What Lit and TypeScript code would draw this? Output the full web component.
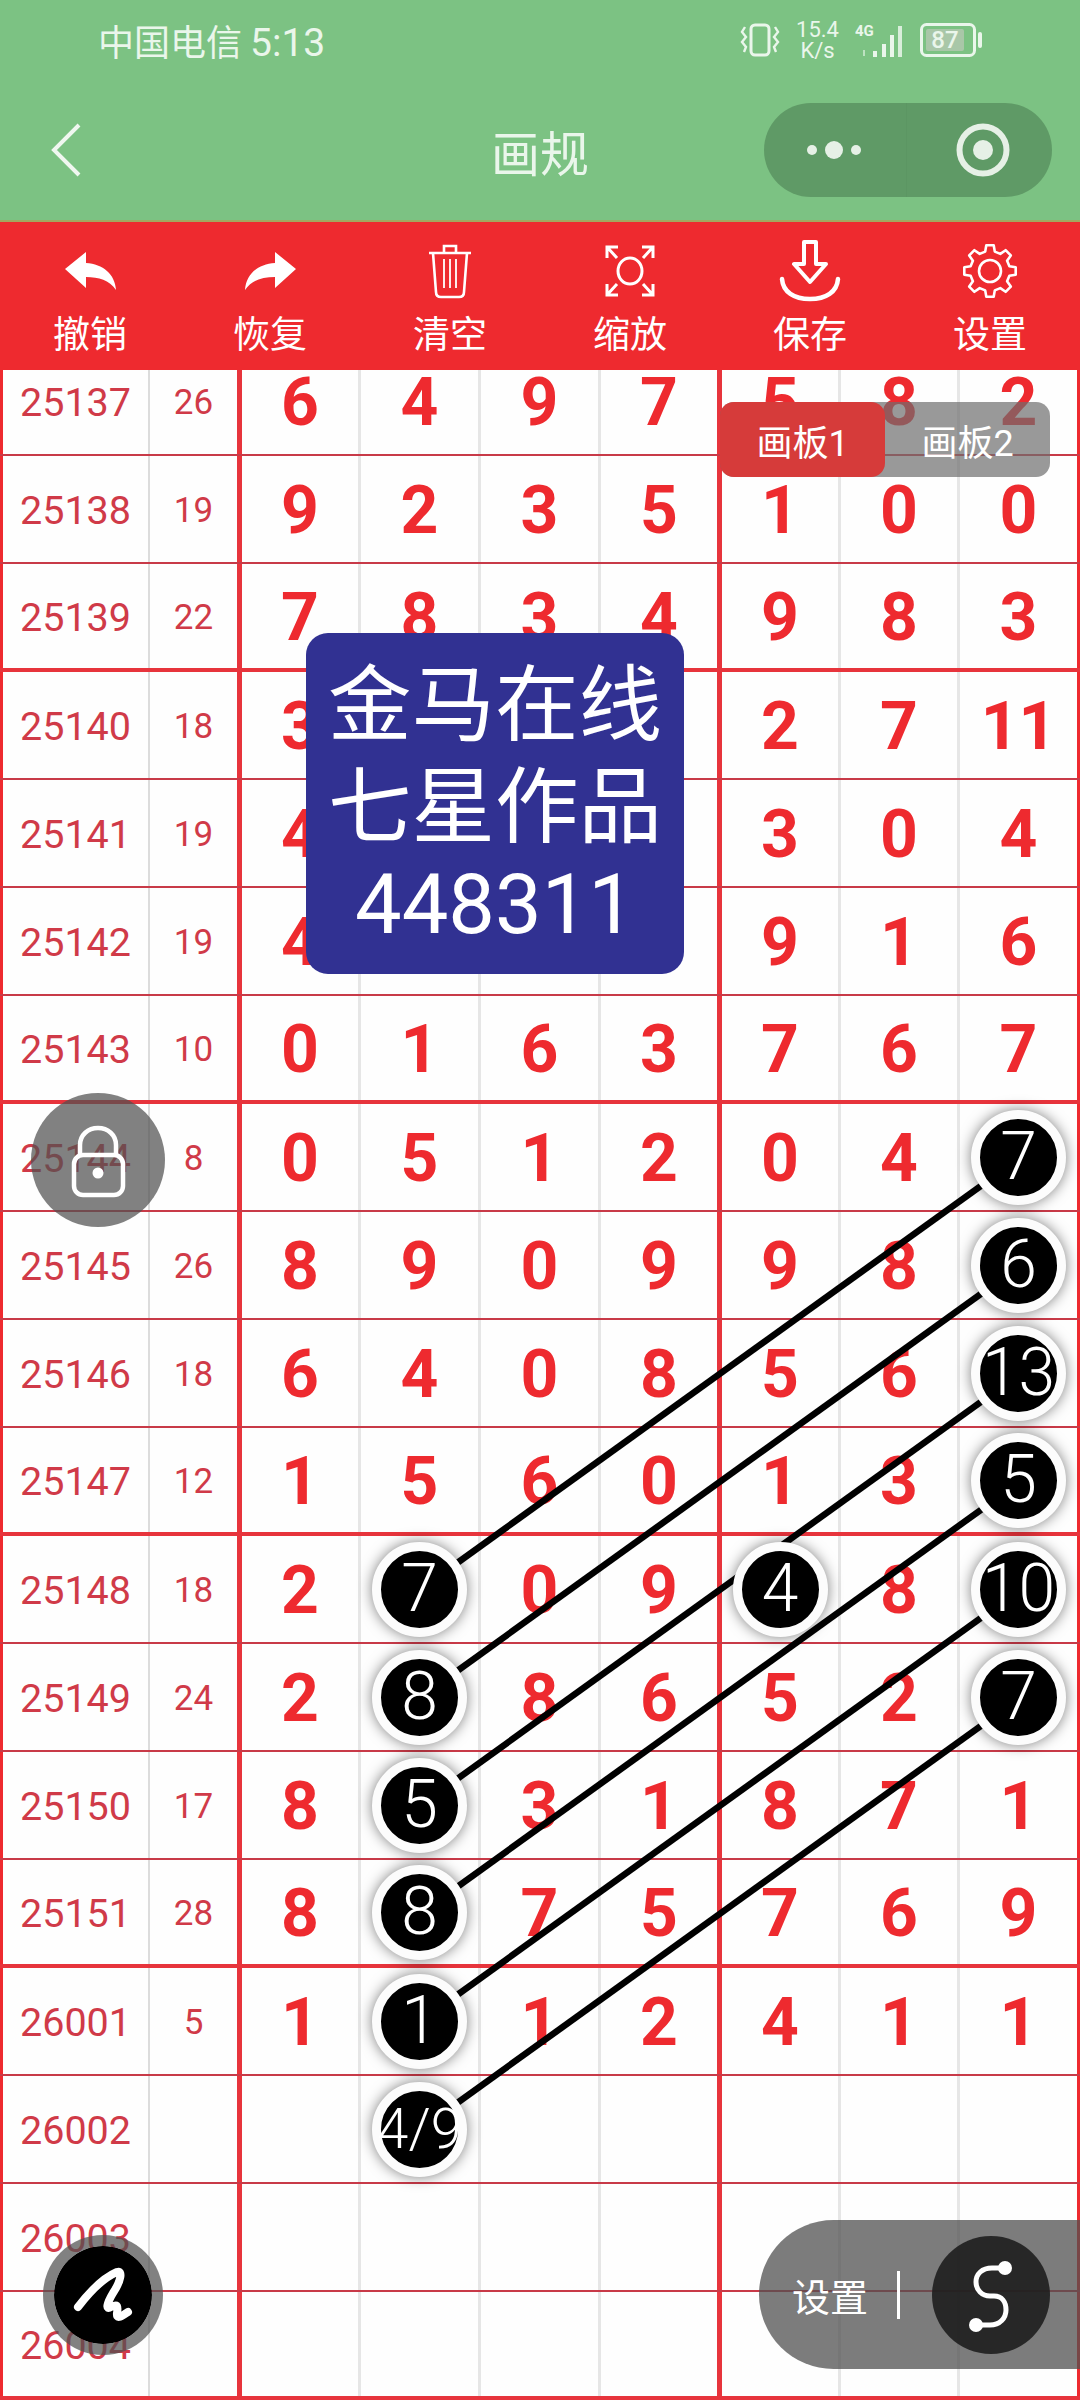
import { html, css, svg, LitElement } from 'lit';
import { customElement } from 'lit/decorators.js';

const ROW_H = 108;

// issue, sum, then the seven digits. Empty means nothing visible in the reference.
const ROWS: string[][] = [
  ['25137', '26', '6', '4', '9', '7', '5', '8', '2'],
  ['25138', '19', '9', '2', '3', '5', '1', '0', '0'],
  ['25139', '22', '7', '8', '3', '4', '9', '8', '3'],
  ['25140', '18', '3', '', '', '', '2', '7', '11'],
  ['25141', '19', '4', '', '', '', '3', '0', '4'],
  ['25142', '19', '4', '', '', '', '9', '1', '6'],
  ['25143', '10', '0', '1', '6', '3', '7', '6', '7'],
  ['25144', '8', '0', '5', '1', '2', '0', '4', ''],
  ['25145', '26', '8', '9', '0', '9', '9', '8', ''],
  ['25146', '18', '6', '4', '0', '8', '5', '6', ''],
  ['25147', '12', '1', '5', '6', '0', '1', '3', ''],
  ['25148', '18', '2', '', '0', '9', '', '8', ''],
  ['25149', '24', '2', '', '8', '6', '5', '2', ''],
  ['25150', '17', '8', '', '3', '1', '8', '7', '1'],
  ['25151', '28', '8', '', '7', '5', '7', '6', '9'],
  ['26001', '5', '1', '', '1', '2', '4', '1', '1'],
  ['26002', '', '', '', '', '', '', '', ''],
  ['26003', '', '', '', '', '', '', '', ''],
  ['26004', '', '', '', '', '', '', '', ''],
];

// "row-digitColumn" -> label
const MARKERS: Record<string, string> = {
  '7-6': '7', '8-6': '6', '9-6': '13', '10-6': '5', '11-6': '10', '12-6': '7',
  '11-1': '7', '12-1': '8', '13-1': '5', '14-1': '8', '15-1': '1', '16-1': '4/9',
  '11-4': '4',
};

const LINKS = [
  [7, 11], [8, 12], [9, 13], [10, 14], [11, 15], [12, 16],
];

const TOOLS = [
  { label: '撤销', icon: 'undo' },
  { label: '恢复', icon: 'redo' },
  { label: '清空', icon: 'trash' },
  { label: '缩放', icon: 'zoom' },
  { label: '保存', icon: 'save' },
  { label: '设置', icon: 'gear' },
];

const colX = (c: number) => 301 + 120 * c;
const rowY = (r: number) => 53 + ROW_H * r;

function gearPath() {
  const pts: string[] = [];
  const teeth = 8;
  for (let i = 0; i < teeth; i++) {
    const a = (i * Math.PI * 2) / teeth;
    const step = Math.PI / teeth;
    const seq: [number, number][] = [
      [20, a - step * 0.62],
      [26, a - step * 0.36],
      [26, a + step * 0.36],
      [20, a + step * 0.62],
    ];
    for (const [r, t] of seq) {
      pts.push(`${(27 + r * Math.sin(t)).toFixed(1)} ${(28 - r * Math.cos(t)).toFixed(1)}`);
    }
  }
  return `M${pts.join(' L')} Z`;
}

const ARROW = 'M1 18 L22 1 V12 C39 13 51 23 52 39 C45 29 35 26 22 26 V37 Z';

const toolIcons: Record<string, unknown> = {
  undo: html`<svg width="53" height="40" viewBox="0 0 53 40"><path d=${ARROW} fill="#fff" /></svg>`,
  redo: html`<svg width="53" height="40" viewBox="0 0 53 40"><path transform="matrix(-1 0 0 1 53 0)" d=${ARROW} fill="#fff" /></svg>`,
  trash: html`<svg width="46" height="56" viewBox="0 0 46 56" fill="none" stroke="#fff" stroke-width="2.6">
    <path d="M2 10 H44 M17 10 V3 H29 V10" />
    <path d="M6 10 L9 49 Q9 54 14 54 H32 Q37 54 37 49 L40 10" />
    <path d="M17 16 V45 M23 16 V45 M29 16 V45" stroke-width="1.8" />
  </svg>`,
  zoom: html`<svg width="50" height="52" viewBox="0 0 50 52" fill="none" stroke="#fff" stroke-width="3">
    <ellipse cx="25" cy="26" rx="12" ry="13" />
    <path d="M2 13 V2 H13 M2 2 L12 13 M37 2 H48 V13 M48 2 L38 13 M2 39 V50 H13 M2 50 L12 39 M37 50 H48 V39 M48 50 L38 39" />
  </svg>`,
  save: html`<svg width="62" height="62" viewBox="0 0 62 62" fill="none" stroke="#fff" stroke-width="4" stroke-linejoin="round" stroke-linecap="round">
    <path d="M25 2 H37 V24 H47 L31 42 L15 24 H25 Z" />
    <path d="M3 39 C4 52 15 59 31 59 C47 59 58 52 59 39" stroke-width="4.5" />
  </svg>`,
  gear: html`<svg width="54" height="56" viewBox="0 0 54 56" fill="none" stroke="#fff" stroke-width="2.6" stroke-linejoin="round">
    <path d=${gearPath()} />
    <circle cx="27" cy="28" r="11" />
  </svg>`,
};

@customElement('app-root')
export class AppRoot extends LitElement {
  static styles = css`
    :host {
      display: block;
      width: 1080px;
      font-family: Roboto, 'Noto Sans CJK SC', sans-serif;
    }
    .app {
      position: relative;
      width: 1080px;
      height: 2400px;
      overflow: hidden;
      background: #fefefe;
    }

    /* header */
    .header {
      height: 222px;
      box-sizing: border-box;
      background: #7cc283;
      border-bottom: 2px solid #a3a860;
      color: #eaf6eb;
    }
    .status {
      height: 80px;
      display: flex;
      align-items: center;
      justify-content: space-between;
      padding: 0 97px 0 98px;
    }
    .carrier {
      font-size: 36px;
      font-family: 'Noto Sans CJK SC', Roboto, sans-serif;
    }
    .carrier span {
      font-family: Roboto, sans-serif;
      font-size: 39px;
    }
    .sys {
      display: flex;
      align-items: center;
      gap: 15px;
    }
    .speed {
      width: 45px;
      text-align: center;
      font-size: 22px;
      line-height: 21px;
    }
    .nav {
      height: 140px;
      display: grid;
      grid-template-columns: 1fr auto 1fr;
      align-items: center;
      padding: 0 28px;
    }
    .back {
      margin-left: 22px;
    }
    .title {
      font-size: 49px;
      font-family: 'Noto Sans CJK SC', sans-serif;
      font-weight: 400;
    }
    .capsule {
      justify-self: end;
      width: 288px;
      height: 94px;
      border-radius: 47px;
      background: #5f9a66;
      display: grid;
      grid-template-columns: 142px 146px;
      align-items: center;
    }
    .slot {
      height: 94px;
      display: flex;
      align-items: center;
      justify-content: center;
    }
    .slot.close {
      border-left: 1px solid #5c9663;
      box-sizing: border-box;
      padding-left: 6px;
    }

    /* toolbar */
    .toolbar {
      height: 148px;
      box-sizing: border-box;
      background: #ee2a2f;
      padding-top: 18px;
      display: grid;
      grid-template-columns: repeat(6, 180px);
    }
    .tool {
      display: flex;
      flex-direction: column;
      align-items: center;
      color: #fff;
    }
    .tool .icon {
      height: 62px;
      display: flex;
      align-items: center;
      justify-content: center;
    }
    .tool .label {
      margin-top: 5px;
      font-size: 37px;
      line-height: 50px;
      font-family: 'Noto Sans CJK SC', sans-serif;
    }

    /* table */
    .sheet {
      height: 2030px;
      overflow: hidden;
    }
    .rows {
      position: relative;
      margin-top: -22px;
    }
    .row {
      height: 108px;
      box-sizing: border-box;
      display: grid;
      grid-template-columns: 150px 92px 119px 120px 120px 121px 119px 119px 120px;
      border-bottom: 2px solid #c83a48;
    }
    .row.group-end {
      border-bottom: 4px solid #e7343c;
    }
    .cell {
      box-sizing: border-box;
      padding-top: 3px;
      display: flex;
      align-items: center;
      justify-content: center;
      border-right: 3px solid #e6e6e6;
      color: #ee2a2f;
      font-size: 66px;
      font-weight: 700;
      line-height: 1;
    }
    .cell.issue {
      border-left: 3px solid #ee2a2f;
      border-right: 2px solid #dcdcdc;
      color: #d03a48;
      font-size: 39.5px;
      font-weight: 400;
    }
    .cell.sum {
      border-right: 5px solid #e7343c;
      color: #d03a48;
      font-size: 35px;
      font-weight: 400;
    }
    .cell.split {
      border-right: 5px solid #e7343c;
    }
    .cell.last {
      border-right: 3px solid #ee2a2f;
    }
    .links {
      position: absolute;
      left: 0;
      top: 0;
      width: 1080px;
      height: 100%;
      z-index: 1;
      pointer-events: none;
    }
    .marker {
      position: relative;
      z-index: 2;
      flex: none;
      width: 95px;
      height: 95px;
      box-sizing: border-box;
      margin-top: -3px;
      border: 9px solid #fcfcfc;
      border-radius: 50%;
      background: #000;
      box-shadow: 0 0 14px rgba(0, 0, 0, 0.5);
      color: #fff;
      font-size: 66px;
      font-weight: 300;
      display: flex;
      align-items: center;
      justify-content: center;
      white-space: nowrap;
    }
    .marker.tiny {
      font-size: 56px;
    }

    /* floating things */
    .tabs {
      position: absolute;
      left: 720px;
      top: 402px;
      z-index: 3;
      display: flex;
      width: 330px;
      height: 75px;
      border-radius: 14px;
      background: rgba(110, 110, 110, 0.7);
      color: #fff;
      font-size: 36px;
      font-family: Roboto, 'Noto Sans CJK SC', sans-serif;
    }
    .tab {
      flex: 1;
      display: flex;
      align-items: center;
      justify-content: center;
      border-radius: 14px;
    }
    .tab.active {
      background: #d63b3a;
    }
    .card {
      position: absolute;
      left: 306px;
      top: 633px;
      z-index: 3;
      width: 378px;
      height: 341px;
      box-sizing: border-box;
      padding: 14px 0;
      border-radius: 22px;
      background: #313192;
      color: #fff;
      font-size: 83.5px;
      line-height: 102px;
      text-align: center;
      font-family: 'Noto Sans CJK SC', sans-serif;
    }
    .card .qq {
      margin-top: 3px;
      font-family: Roboto, sans-serif;
      font-size: 83px;
      font-weight: 400;
    }
    .lock {
      position: absolute;
      left: 31px;
      top: 1093px;
      z-index: 3;
      width: 134px;
      height: 134px;
      border-radius: 50%;
      background: rgba(80, 80, 80, 0.72);
    }
    .pen {
      position: absolute;
      left: 43px;
      top: 2235px;
      z-index: 3;
      box-sizing: border-box;
      width: 120px;
      height: 120px;
      border-radius: 50%;
      background: #000;
      background-clip: padding-box;
      border: 11px solid rgba(80, 80, 80, 0.72);
    }
    .pill {
      position: absolute;
      right: 0;
      top: 2220px;
      z-index: 3;
      width: 321px;
      height: 149px;
      box-sizing: border-box;
      padding-left: 33px;
      border-radius: 75px 0 0 75px;
      background: rgba(80, 80, 80, 0.75);
      display: flex;
      align-items: center;
      color: #fff;
    }
    .pill .text {
      font-size: 38px;
      font-family: 'Noto Sans CJK SC', sans-serif;
    }
    .pill .bar {
      width: 3px;
      height: 48px;
      margin: 0 32px 0 29px;
      background: #fff;
    }
    .pill .round {
      width: 118px;
      height: 118px;
      border-radius: 50%;
      background: rgba(30, 30, 30, 0.9);
    }
    svg {
      display: block;
    }
  `;

  private statusIcons() {
    return html`
      <div class="sys">
        <svg width="40" height="34" viewBox="0 0 40 34" fill="none" stroke="#eaf6eb" stroke-width="3">
          <rect x="11" y="2" width="18" height="30" rx="4" />
          <path d="M5 4 L2 9 L6 14 L2 19 L6 24 L4 29 M35 4 L38 9 L34 14 L38 19 L34 24 L36 29" stroke-width="2.4" />
        </svg>
        <div class="speed">15.4<br />K/s</div>
        <svg width="50" height="36" viewBox="0 0 50 36" fill="#eaf6eb">
          <text x="0" y="14" font-size="15" font-weight="700" font-family="Roboto, sans-serif">4G</text>
          <rect x="8" y="28" width="2" height="6" opacity="0.6" />
          <rect x="18" y="29" width="4" height="6" />
          <rect x="27" y="22" width="4" height="13" />
          <rect x="35" y="13" width="4" height="22" />
          <rect x="43" y="4" width="4" height="31" opacity="0.85" />
        </svg>
        <svg width="63" height="34" viewBox="0 0 63 34">
          <rect x="1.5" y="1.5" width="53" height="31" rx="5" fill="none" stroke="#eaf6eb" stroke-width="3" />
          <rect x="6" y="6" width="38" height="22" rx="2" fill="#a9c7a8" />
          <text x="25" y="25" text-anchor="middle" font-size="24" font-weight="500" font-family="Roboto, sans-serif" fill="#eaf6eb">87</text>
          <rect x="58" y="9" width="4" height="16" rx="2" fill="#eaf6eb" />
        </svg>
      </div>
    `;
  }

  private renderCell(row: string[], r: number, i: number) {
    const value = row[i];
    if (i === 0) return html`<div class="cell issue">${value}</div>`;
    if (i === 1) return html`<div class="cell sum">${value}</div>`;
    const c = i - 2;
    const mark = MARKERS[`${r}-${c}`];
    const cls = c === 3 ? 'cell split' : c === 6 ? 'cell last' : 'cell';
    return html`<div class=${cls}>
      ${mark
        ? html`<div class=${mark.length > 2 ? 'marker tiny' : 'marker'}>${mark}</div>`
        : value}
    </div>`;
  }

  private renderLinks() {
    const h = ROWS.length * ROW_H;
    return html`<svg class="links" viewBox="0 0 1080 ${h}" stroke="#000" stroke-width="6.5">
      ${LINKS.map(
        ([a, b]) => svg`<line x1=${colX(6)} y1=${rowY(a)} x2=${colX(1)} y2=${rowY(b)} />`,
      )}
    </svg>`;
  }

  render() {
    return html`
      <div class="app">
        <div class="header">
          <div class="status">
            <div class="carrier">中国电信 <span>5:13</span></div>
            ${this.statusIcons()}
          </div>
          <div class="nav">
            <svg class="back" width="32" height="54" viewBox="0 0 32 54" fill="none" stroke="#f0f7f0" stroke-width="4">
              <path d="M29 2 L4 27 L29 52" />
            </svg>
            <div class="title">画规</div>
            <div class="capsule">
              <div class="slot">
                <svg width="60" height="24" viewBox="0 0 60 24" fill="#e6f0e6">
                  <circle cx="7" cy="12" r="5" />
                  <circle cx="29" cy="12" r="9" />
                  <circle cx="51" cy="12" r="5" />
                </svg>
              </div>
              <div class="slot close">
                <svg width="56" height="56" viewBox="0 0 56 56">
                  <circle cx="28" cy="28" r="23.5" fill="none" stroke="#e6f0e6" stroke-width="6" />
                  <circle cx="28" cy="28" r="10" fill="#e6f0e6" />
                </svg>
              </div>
            </div>
          </div>
        </div>

        <div class="toolbar">
          ${TOOLS.map(
            (t) => html`<div class="tool">
              <div class="icon">${toolIcons[t.icon]}</div>
              <div class="label">${t.label}</div>
            </div>`,
          )}
        </div>

        <div class="sheet">
          <div class="rows">
            ${ROWS.map(
              (row, r) => html`<div class=${(r - 2) % 4 === 0 ? 'row group-end' : r === ROWS.length - 1 ? 'row group-end' : 'row'}>
                ${row.map((_, i) => this.renderCell(row, r, i))}
              </div>`,
            )}
            ${this.renderLinks()}
          </div>
        </div>

        <div class="tabs">
          <div class="tab active">画板1</div>
          <div class="tab">画板2</div>
        </div>

        <div class="card">
          <div>金马在线</div>
          <div>七星作品</div>
          <div class="qq">448311</div>
        </div>

        <div class="lock">
          <svg width="134" height="134" viewBox="0 0 134 134" fill="none" stroke="#fff" stroke-width="4.5">
            <rect x="43" y="62" width="49" height="40" rx="9" />
            <path d="M49 62 V52 C49 42 57 35 67 35 C77 35 85 42 85 52 V62" />
            <circle cx="67" cy="80" r="5.5" fill="#fff" stroke="none" />
          </svg>
        </div>

        <div class="pen">
          <svg width="98" height="98" viewBox="11 11 98 98" fill="none" stroke="#fff" stroke-width="8" stroke-linecap="round" stroke-linejoin="round">
            <path d="M35 72 C48 55 62 42 74 37 C80 35 78 46 70 58 C64 68 62 76 68 72 C72 70 76 68 74 78 C73 86 80 80 85 77" />
          </svg>
        </div>

        <div class="pill">
          <div class="text">设置</div>
          <div class="bar"></div>
          <div class="round">
            <svg width="118" height="118" viewBox="0 0 118 118" fill="none" stroke="#fff" stroke-width="5">
              <path d="M73 32 H60 C50 32 44 38 44 46 C44 54 50 60 58 60 H62 C70 60 74 66 74 74 C74 82 68 89 58 89 H44" />
              <circle cx="73" cy="32" r="7" fill="#fff" stroke="none" />
              <circle cx="44" cy="89" r="7" fill="#fff" stroke="none" />
            </svg>
          </div>
        </div>
      </div>
    `;
  }
}

declare global {
  interface HTMLElementTagNameMap {
    'app-root': AppRoot;
  }
}
